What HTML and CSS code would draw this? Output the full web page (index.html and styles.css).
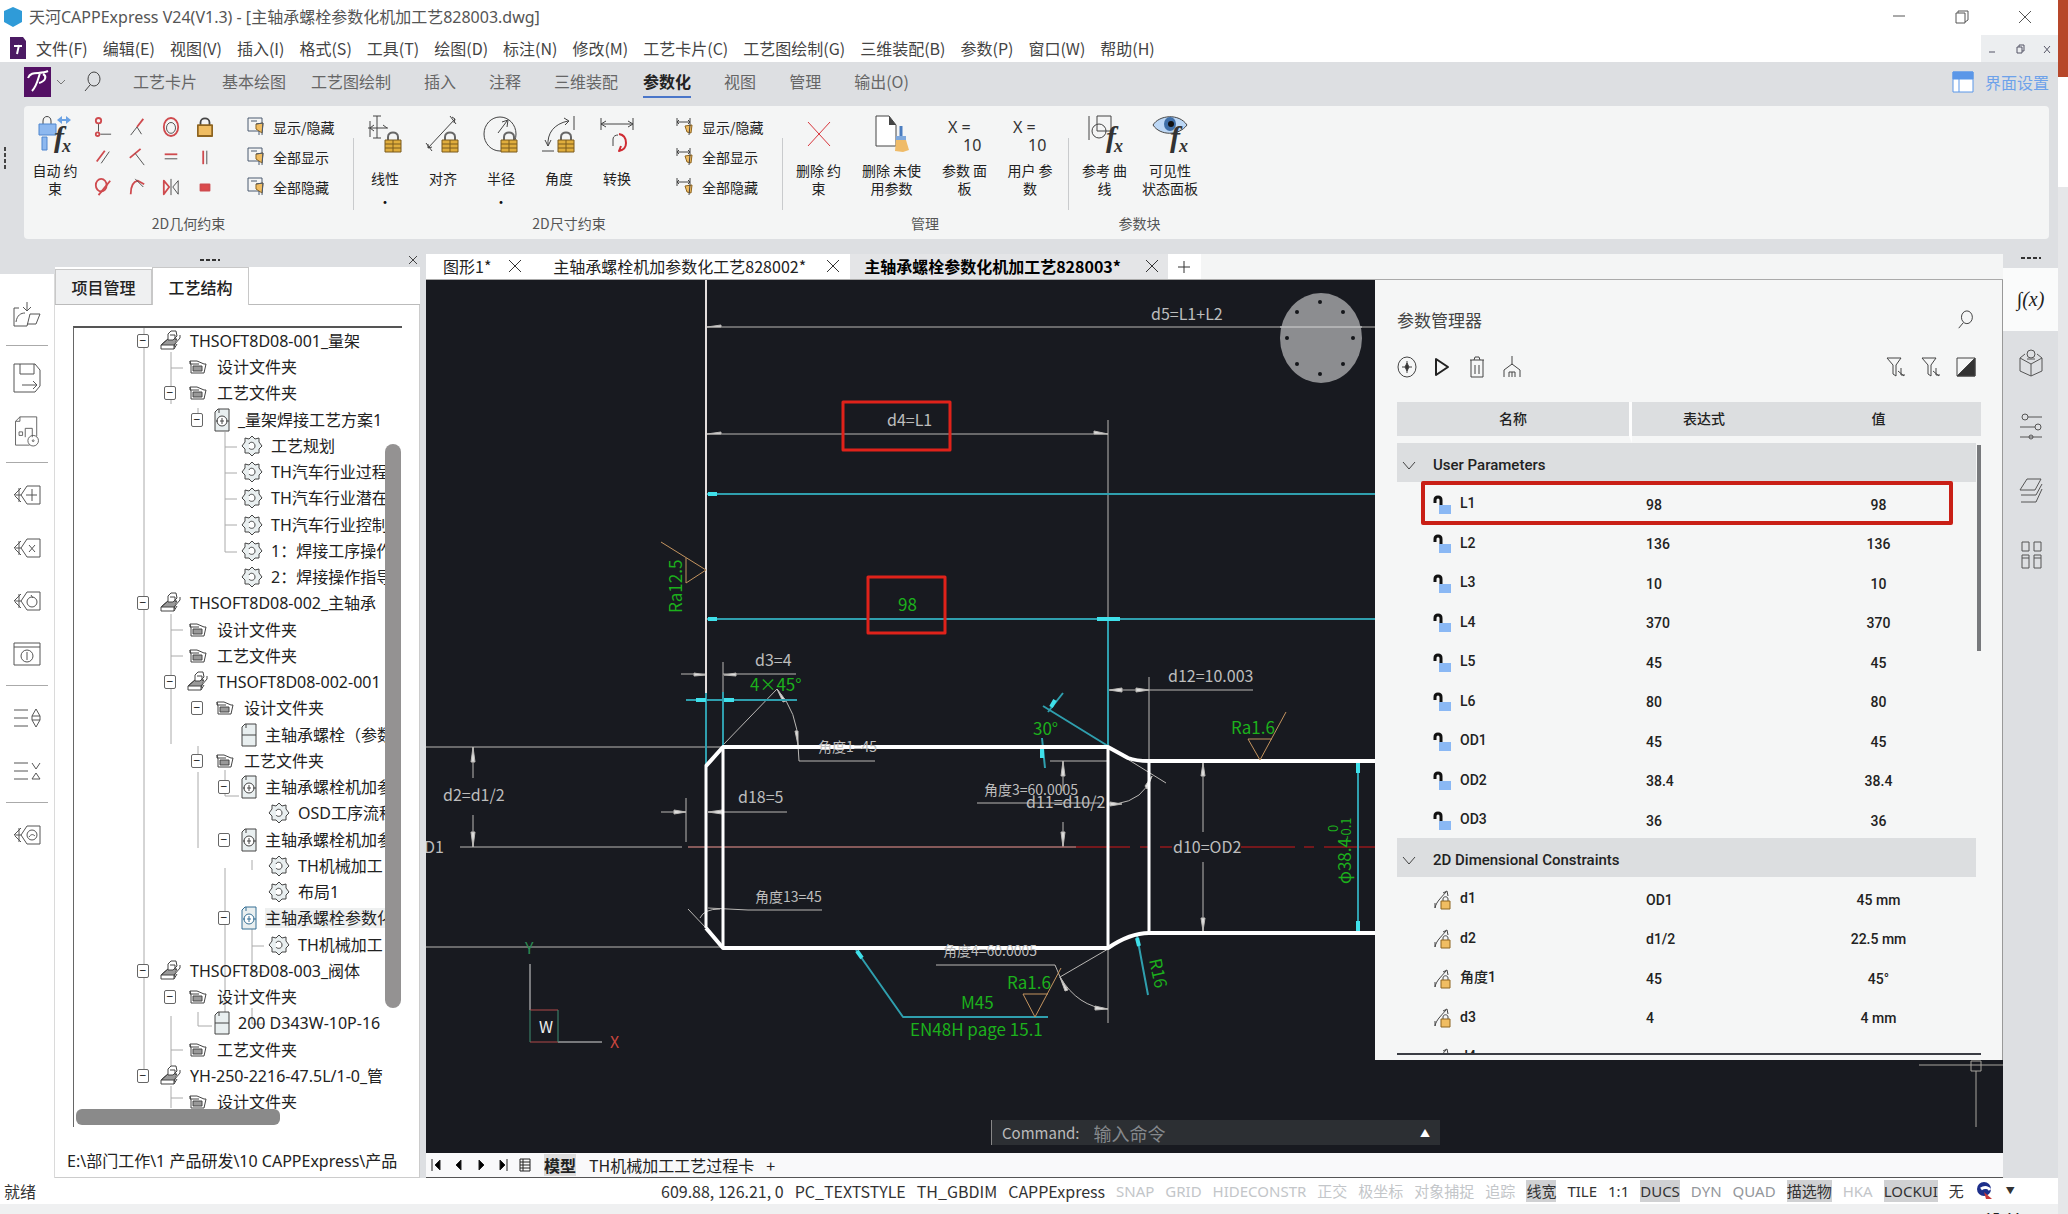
FILE: index.html
```html
<!DOCTYPE html>
<html lang="zh-CN">
<head>
<meta charset="utf-8">
<title>天河CAPPExpress V24(V1.3)</title>
<link rel="stylesheet" href="styles.css">
</head>
<body>
<svg class="defs" aria-hidden="true">
  <symbol id="i-search" viewBox="0 0 18 22"><ellipse cx="10" cy="8" rx="6" ry="7"/><path d="M6 14 1 20"/></symbol>
  <symbol id="i-part" viewBox="0 0 22 22"><path class="shade" d="M2 14 8 9h9l-3 8H3z"/><path d="M1 15h13v4H1zM1 15 8 9M14 15l6-7V5M8 10V4l3-3h5l1 5-4 4zM10 5h5v5M14 19l3-5"/></symbol>
  <symbol id="i-folder" viewBox="0 0 22 22"><path d="M3 5h7l7 3h2l-2 9H4V9zM3 5v3h9"/><path class="shade" d="M6 10h9v5H6z"/></symbol>
  <symbol id="i-doc" viewBox="0 0 16 24"><path class="fold" d="M4 1h11v22H1V4z"/><path d="M1 12h14M5 1v4"/></symbol>
  <symbol id="i-plan" viewBox="0 0 16 24"><path class="fold" d="M4 1h11v22H1V4z"/><circle cx="8" cy="13" r="5"/><path d="M5 1v4M2 13h2M12 13h3M8 10v6M6 13h4"/></symbol>
  <symbol id="i-gear" viewBox="0 0 22 22"><path class="fold" d="m11 1 3 3 4-1 0 4 3 4-3 3v4l-4 0-3 3-3-3-4 0v-4l-3-3 3-4 0-4 4 1z"/><path d="M8 9c1-3 6-2 6 2s-5 4-6 2"/></symbol>
  <symbol id="i-unlock" viewBox="0 0 18 20"><path class="shackle" d="M2 8V5c0-4 6-4 6 0v5"/><path class="body" d="M6 10h12v9H6z"/></symbol>
  <symbol id="i-dim" viewBox="0 0 18 20"><path class="ink" d="M2 18C3 12 8 8 13 2M10 3l4-2 1 5M2 13v5"/><path class="ink" d="M10 12V9c0-3 5-3 5 0v3"/><path class="gold" d="M8 11h9v8H8z"/></symbol>
  <symbol id="i-lock" viewBox="0 0 18 22"><path class="ink" d="M4 9V6c0-6 10-6 10 0v3"/><path class="gold" d="M1 9h16v12H1z"/></symbol>
  <symbol id="i-biglock" viewBox="0 0 18 22"><path class="ring" d="M4 9V6c0-6 10-6 10 0v3"/><path class="brass" d="M1 9h16v12H1zM1 13h16M1 17h16M9 9v12"/></symbol>
  <symbol id="i-show" viewBox="0 0 18 20"><path class="box" d="M1 1h14v13H1zM4 4h6"/><path class="gold" d="m9 7 7-1-1 10-6-4z"/><path d="m9 7 7-1-1 12M12 14v4"/></symbol>
  <symbol id="i-dimshow" viewBox="0 0 18 20"><path class="ink" d="M1 1v8M1 5h13M14 1v8M3 3 1 5l2 2M12 3l2 2-2 2"/><path class="gold" d="m9 9 7-1-1 8-4-1z"/><path class="ink" d="M14 8l-1 10"/></symbol>
  <symbol id="i-tag" viewBox="0 0 28 22"><path class="heavy" d="M1 11h7M6 4v14M1 11l7-7M2 12l6 6"/><path d="m8 11 6-9h13v18H14z"/></symbol>
  <symbol id="i-filter" viewBox="0 0 20 22"><path d="M1 2h14l-5 7v11l-3-2V9z"/><path class="blue" d="M15 12v7h4M12 15l6 5"/></symbol>
</svg>

<div class="app">
  <header class="titlebar">
    <svg class="logo" viewBox="0 0 20 20"><path fill="#2f9bd8" d="M10 0 19 4v11l-9 5-9-5V4z"/></svg>
    <h1>天河CAPPExpress V24(V1.3) - [主轴承螺栓参数化机加工艺828003.dwg]</h1>
    <div class="winbtns">
      <button aria-label="最小化"><svg viewBox="0 0 14 14"><path d="M1 6h12"/></svg></button>
      <button aria-label="还原"><svg viewBox="0 0 14 14"><path d="M1 3h9v10H1zM3 3V1h10v9l-3 2"/></svg></button>
      <button aria-label="关闭"><svg viewBox="0 0 14 14"><path d="m1 1 12 12M13 1 1 13"/></svg></button>
    </div>
  </header>
  <nav class="menubar">
    <svg class="mini" viewBox="0 0 16 22"><path fill="#4b1a63" d="M0 0h13l3 4v18H0z"/><path d="M4 9h8M9 8l-2 9" stroke="#fff" stroke-width="2" fill="none"/></svg>
    <button>文件(F)</button><button>编辑(E)</button><button>视图(V)</button><button>插入(I)</button><button>格式(S)</button><button>工具(T)</button><button>绘图(D)</button><button>标注(N)</button><button>修改(M)</button><button>工艺卡片(C)</button><button>工艺图绘制(G)</button><button>三维装配(B)</button><button>参数(P)</button><button>窗口(W)</button><button>帮助(H)</button>
    <div class="mdibtns">
      <button aria-label="最小化子窗口"><svg viewBox="0 0 10 10"><path d="M2 8h6"/></svg></button>
      <button aria-label="还原子窗口"><svg viewBox="0 0 10 10"><path d="M2 3h5v6H2zM4 3V1h5v6H7"/></svg></button>
      <button aria-label="关闭子窗口"><svg viewBox="0 0 10 10"><path d="m2 2 6 7M8 2 2 9"/></svg></button>
    </div>
  </nav>
  <div class="tabbar">
    <svg class="brand" viewBox="0 0 27 30"><path fill="#531064" d="M0 0h27v30H0z"/><path d="M4 11C7 3 16 8 24 4M16 6c-2 6-3 13-8 18M19 7c4 2 3 7-4 9" stroke="#fff" stroke-width="2" fill="none"/></svg>
    <svg class="caret" viewBox="0 0 10 6"><path d="m1 1 4 4 4-4"/></svg>
    <svg class="find"><use href="#i-search"/></svg>
    <button class="tab tab-wide">工艺卡片</button><button class="tab tab-wide">基本绘图</button><button class="tab">工艺图绘制</button><button class="tab">插入</button><button class="tab">注释</button><button class="tab tab-wide">三维装配</button><button class="tab active">参数化</button><button class="tab">视图</button><button class="tab">管理</button><button class="tab">输出(O)</button>
    <a class="uiset" href="#"><svg viewBox="0 0 22 22"><path d="M1 1h20v20H1z"/><path fill="#5b97e8" d="M1 1h20v7H1z"/><path d="M7 8v13"/></svg>界面设置</a>
  </div>
  <section class="ribbonwrap">
    <svg class="grip" viewBox="0 0 4 24"><path d="M2 0v24" stroke-dasharray="4 2"/></svg>
    <div class="ribbon">
      <div class="group g1">
        <div class="gbody">
          <button class="big first"><svg viewBox="0 0 36 38"><path d="M6 9V6c0-6 8-6 8 0v3" class="ink"/><path d="M2 9h17v11H2zM5 22h5v13H5z" fill="#8db8ef" stroke="#4f86cf"/><path d="m20 5 5-4v3h4V1l5 4-5 4V6h-4v3z" fill="#6ba2e4"/><text class="fx" x="17" y="32">f</text><text class="fx small" x="25" y="37">x</text></svg><span>自动 约<br>束</span></button>
          <div class="minis">
            <button aria-label="重合"><svg viewBox="0 0 20 22"><path d="M5 7v9M7 19h12" class="ink"/><circle cx="5" cy="4" r="3"/><circle cx="4" cy="19" r="2"/></svg></button>
            <button aria-label="共线"><svg viewBox="0 0 20 22"><path class="ink" d="M3 20 10 11l5 8"/><path d="m10 11 7-9"/></svg></button>
            <button aria-label="同心"><svg viewBox="0 0 20 22"><ellipse cx="10" cy="11" rx="8" ry="10"/><ellipse class="ink" cx="10" cy="12" rx="5" ry="6"/></svg></button>
            <button aria-label="固定"><svg viewBox="0 0 20 22"><use href="#i-lock" width="18" height="22" x="1"/></svg></button>
            <button aria-label="平行"><svg viewBox="0 0 20 22"><path d="M3 16 12 4"/><path class="ink" d="M8 18 17 5"/></svg></button>
            <button aria-label="垂直"><svg viewBox="0 0 20 22"><path d="M2 12 14 2"/><path class="ink" d="m8 7 10 13"/></svg></button>
            <button aria-label="水平"><svg viewBox="0 0 20 22"><path d="M3 8h14"/><path class="ink" d="M3 13h14"/></svg></button>
            <button aria-label="竖直"><svg viewBox="0 0 20 22"><path d="M8 4v15"/><path class="ink" d="M12 4v15"/></svg></button>
            <button aria-label="相切"><svg viewBox="0 0 20 22"><ellipse cx="8" cy="9" rx="6" ry="7"/><path d="M5 20 18 4"/></svg></button>
            <button aria-label="平滑"><svg viewBox="0 0 20 22"><path d="M3 19C3 10 6 5 11 4l7 4"/><path class="ink" d="m8 2 9 9"/></svg></button>
            <button aria-label="对称"><svg viewBox="0 0 20 22"><path d="m2 4 6 7-6 8z"/><path class="ink" d="m18 4-6 7 6 8zM10 2v18"/></svg></button>
            <button aria-label="相等"><svg viewBox="0 0 20 22"><path fill="#dc4a4c" d="M5 8h10v7H5z"/></svg></button>
          </div>
          <div class="list"><button><svg><use href="#i-show"/></svg>显示/隐藏</button><button><svg><use href="#i-show"/></svg>全部显示</button><button><svg><use href="#i-show"/></svg>全部隐藏</button></div>
        </div>
        <p>2D几何约束</p>
      </div>
      <div class="group g2">
        <div class="gbody">
          <button class="big one"><svg viewBox="0 0 36 38"><path class="ink" d="M3 6v16M10 1v22M6 1h8M6 23h8M1 13h20M3 13l4-3M3 13l4 3M20 13l-4-3"/><use href="#i-biglock" x="17" y="16" width="18" height="22"/></svg><span>线性</span><i>•</i></button>
          <button class="big one"><svg viewBox="0 0 36 38"><path class="ink" d="M3 33 30 4M25 1l6 8M1 28l6 8M27 2l3 2-1 4M3 29v4l4-1"/><use href="#i-biglock" x="16" y="16" width="18" height="22"/></svg><span>对齐</span></button>
          <button class="big one"><svg viewBox="0 0 36 38"><ellipse class="ink" cx="17" cy="19" rx="16" ry="17"/><path class="ink" d="m15 18 9-12M19 7l6-2-1 7"/><use href="#i-biglock" x="17" y="16" width="18" height="22"/></svg><span>半径</span><i>•</i></button>
          <button class="big one"><svg viewBox="0 0 36 38"><path class="ink" d="M7 31C6 18 13 9 27 6M33 1v14M1 36h12M23 3l5 3-4 4M4 25l3 6 3-6"/><use href="#i-biglock" x="16" y="16" width="18" height="22"/></svg><span>角度</span></button>
          <button class="big one"><svg viewBox="0 0 36 38"><path class="ink" d="M2 3v12M34 3v12M2 9h32M7 6 2 9l5 3M29 6l5 3-5 3M14 31V24c0-3 3-4 5-4"/><path d="M20 19c6 1 7 5 7 9s-2 7-7 8l2-5" stroke="#cf2b32" stroke-width="2"/></svg><span>转换</span></button>
          <div class="list"><button><svg><use href="#i-dimshow"/></svg>显示/隐藏</button><button><svg><use href="#i-dimshow"/></svg>全部显示</button><button><svg><use href="#i-dimshow"/></svg>全部隐藏</button></div>
        </div>
        <p>2D尺寸约束</p>
      </div>
      <div class="group g3">
        <div class="gbody">
          <button class="big"><svg viewBox="0 0 36 38"><path d="M7 7 29 31M29 7 7 31" stroke="#d8363c"/></svg><span>删除 约<br>束</span></button>
          <button class="big"><svg viewBox="0 0 36 38"><path class="ink" fill="#fff" d="M2 1h13l7 9v21H2z"/><path fill="#444" d="M15 1v9h7z"/><path d="M27 11v10" stroke="#4a7dc0" stroke-width="3"/><path d="M22 21h10v4H22z" fill="#7fa9dd"/><path d="M22 25h10l3 10-6 2-8-1z" fill="#efbb68"/></svg><span>删除 未使<br>用参数</span></button>
          <button class="big"><svg viewBox="0 0 36 38"><text class="eq" x="1" y="18">X =</text><text class="eq" x="16" y="36">10</text></svg><span>参数 面<br>板</span></button>
          <button class="big narrow"><svg viewBox="0 0 36 38"><text class="eq" x="1" y="18">X =</text><text class="eq" x="16" y="36">10</text></svg><span>用户 参<br>数</span></button>
        </div>
        <p>管理</p>
      </div>
      <div class="group g4">
        <div class="gbody">
          <button class="big"><svg viewBox="0 0 36 38"><path class="ink" d="M2 1v24M10 1h14v15H10z"/><ellipse class="ink" cx="12" cy="16" rx="7" ry="7"/><text class="fx" x="19" y="32">f</text><text class="fx small" x="27" y="37">x</text></svg><span>参考 曲<br>线</span></button>
          <button class="big narrow"><svg viewBox="0 0 36 38"><path fill="#bcd7f5" class="ink" d="M1 10C7 0 27-2 35 10 27 21 8 21 1 10z"/><ellipse cx="18" cy="9" rx="6" ry="7" fill="#3f6fa8"/><circle cx="19" cy="9" r="3" fill="#111"/><text class="fx" x="18" y="32">f</text><text class="fx small" x="27" y="37">x</text></svg><span>可见性<br>状态面板</span></button>
        </div>
        <p>参数块</p>
      </div>
    </div>
  </section>

  <main class="work">
    <aside class="strip">
      <button aria-label="打开" class="s1"><svg viewBox="0 0 28 26"><path d="M1 7v18h13l3-12h10l-4 10h-9M1 7h5M3 21c1-7 5-9 9-9M14 1v9M10 6l4 4 4-4"/></svg></button>
      <hr class="tight">
      <button aria-label="保存"><svg viewBox="0 0 28 30"><path d="M1 1h21l5 6v16l-5 6H1zM7 1v10h14V1M9 22h15M20 18l4 4-4 4"/></svg></button>
      <button aria-label="图纸设置"><svg viewBox="0 0 28 34"><path d="M6 1h19v22M1 6v27h16M1 6l5-5v5zM5 18h4v4H5zM12 24V14h8v10"/><circle cx="21" cy="28" r="6"/><circle cx="21" cy="28" r="1"/></svg></button>
      <hr>
      <button aria-label="新增"><svg viewBox="0 0 28 22"><use href="#i-tag"/><path d="M13 11h11M19 5v12"/></svg></button>
      <button aria-label="删除"><svg viewBox="0 0 28 22"><use href="#i-tag"/><path d="m16 8 6 7M22 8l-6 7"/></svg></button>
      <button aria-label="刷新"><svg viewBox="0 0 28 22"><use href="#i-tag"/><ellipse cx="19" cy="12" rx="5" ry="5"/><path d="m18 5 2 3"/></svg></button>
      <button aria-label="信息"><svg viewBox="0 0 28 24"><path d="M1 1h26v22H1zM1 5h26"/><circle cx="14" cy="14" r="6"/><path d="M14 10v8"/></svg></button>
      <hr>
      <button aria-label="展开"><svg viewBox="0 0 28 18"><path d="M1 1h14M1 9h14M1 17h14M23 0l4 7h-8zM23 18l4-7h-8zM19 7v4M27 7v4"/></svg></button>
      <button aria-label="折叠"><svg viewBox="0 0 28 18"><path d="M1 1h14M1 9h14M1 17h14M19 1l4 6 4-6M19 17l4-6 4 6z"/></svg></button>
      <hr>
      <button aria-label="定位"><svg viewBox="0 0 28 22"><use href="#i-tag"/><circle cx="19" cy="11" r="5"/><path d="M16 13c2-3 4-3 6-1"/></svg></button>
    </aside>

    <aside class="side">
      <div class="sidehead"><svg class="dots" viewBox="0 0 20 4"><path d="M0 2h20" stroke-dasharray="4 2"/></svg><button aria-label="关闭面板"><svg viewBox="0 0 10 10"><path d="m1 1 8 8M9 1 1 9"/></svg></button></div>
      <div class="sidetabs"><button>项目管理</button><button class="on">工艺结构</button></div>
      <div class="sidebody">
        <div class="tree">
          <svg class="wires" viewBox="0 0 311 780"><path d="M70 0v742M97 24v52M97 40h12M124 80v10M151 104v120M151 119h12M151 145h12M151 171h12M151 197h12M151 224h12M97 286v130M97 302h12M97 328h12M124 418v10M124 444v76M151 442v26h14M151 540v164M178 532v10M178 580v64M178 618h12M178 644h12M178 680v16h12M97 750v-62M124 684v14h14M97 722h12M97 758v22M97 770h12"/></svg>
          <ul>
            <li class="l1"><button>−</button><svg><use href="#i-part"/></svg>THSOFT8D08-001_量架</li>
            <li class="l2"><b></b><svg><use href="#i-folder"/></svg>设计文件夹</li>
            <li class="l2"><button>−</button><svg><use href="#i-folder"/></svg>工艺文件夹</li>
            <li class="l3"><button>−</button><svg class="pg"><use href="#i-plan"/></svg>_量架焊接工艺方案1</li>
            <li class="l4"><b></b><svg><use href="#i-gear"/></svg>工艺规划</li>
            <li class="l4"><b></b><svg><use href="#i-gear"/></svg>TH汽车行业过程</li>
            <li class="l4"><b></b><svg><use href="#i-gear"/></svg>TH汽车行业潜在</li>
            <li class="l4"><b></b><svg><use href="#i-gear"/></svg>TH汽车行业控制</li>
            <li class="l4"><b></b><svg><use href="#i-gear"/></svg>1：焊接工序操作</li>
            <li class="l4"><b></b><svg><use href="#i-gear"/></svg>2：焊接操作指导</li>
            <li class="l1"><button>−</button><svg><use href="#i-part"/></svg>THSOFT8D08-002_主轴承</li>
            <li class="l2"><b></b><svg><use href="#i-folder"/></svg>设计文件夹</li>
            <li class="l2"><b></b><svg><use href="#i-folder"/></svg>工艺文件夹</li>
            <li class="l2"><button>−</button><svg><use href="#i-part"/></svg>THSOFT8D08-002-001</li>
            <li class="l3"><button>−</button><svg><use href="#i-folder"/></svg>设计文件夹</li>
            <li class="l4"><b></b><svg class="pg"><use href="#i-doc"/></svg>主轴承螺栓（参数</li>
            <li class="l3"><button>−</button><svg><use href="#i-folder"/></svg>工艺文件夹</li>
            <li class="l4"><button>−</button><svg class="pg"><use href="#i-plan"/></svg>主轴承螺栓机加参</li>
            <li class="l5"><b></b><svg><use href="#i-gear"/></svg>OSD工序流程</li>
            <li class="l4"><button>−</button><svg class="pg"><use href="#i-plan"/></svg>主轴承螺栓机加参</li>
            <li class="l5"><b></b><svg><use href="#i-gear"/></svg>TH机械加工</li>
            <li class="l5"><b></b><svg><use href="#i-gear"/></svg>布局1</li>
            <li class="l4 sel"><button>−</button><svg class="pg"><use href="#i-plan"/></svg><span>主轴承螺栓参数化</span></li>
            <li class="l5"><b></b><svg><use href="#i-gear"/></svg>TH机械加工</li>
            <li class="l1"><button>−</button><svg><use href="#i-part"/></svg>THSOFT8D08-003_阀体</li>
            <li class="l2"><button>−</button><svg><use href="#i-folder"/></svg>设计文件夹</li>
            <li class="l3"><b></b><svg class="pg"><use href="#i-doc"/></svg>200 D343W-10P-16</li>
            <li class="l2"><b></b><svg><use href="#i-folder"/></svg>工艺文件夹</li>
            <li class="l1"><button>−</button><svg><use href="#i-part"/></svg>YH-250-2216-47.5L/1-0_管</li>
            <li class="l2"><b></b><svg><use href="#i-folder"/></svg>设计文件夹</li>
          </ul>
          <div class="vbar"></div><div class="hbar"></div>
        </div>
        <p class="path">E:\部门工作\1 产品研发\10 CAPPExpress\产品</p>
      </div>
    </aside>

    <section class="editor">
      <div class="doctabs">
        <div class="dt d1"><button>图形1*</button><button class="x" aria-label="关闭"><svg viewBox="0 0 12 12"><path d="m0 0 12 12M12 0 0 12"/></svg></button></div>
        <div class="dt d2"><button>主轴承螺栓机加参数化工艺828002*</button><button class="x" aria-label="关闭"><svg viewBox="0 0 12 12"><path d="m0 0 12 12M12 0 0 12"/></svg></button></div>
        <div class="dt on"><button>主轴承螺栓参数化机加工艺828003*</button><button class="x" aria-label="关闭"><svg viewBox="0 0 12 12"><path d="m0 0 12 12M12 0 0 12"/></svg></button></div>
        <button class="plus" aria-label="新建"><svg viewBox="0 0 12 12"><path d="M6 0v12M0 6h12"/></svg></button>
      </div>
      <div class="canvas">
        <svg class="cad" viewBox="426 280 1577 873" preserveAspectRatio="xMinYMin slice">
          <g class="thin">
            <path d="M707 327H1400M707 434H1108M1108 420V620M426 747H723M426 947H723M460 847H682M473 747v31M473 815v32M681 674h25M723 674h73M723 662v40M723 745 777 689Q798 712 798 745L799 761H875M686 798v44M661 812h25M708 812h79M688 909l18 19M700 918q4-9 20-9M708 908l40 2H822"/>
            <path d="M1149 677v84M1110 690h143M1050 761h58M1063 761v30M1063 822v25M977 803h123M1108 747l58 36M1152 776q-8 24-36 28h-8M1203 763v69M1203 862v69M936 965h119l11 26M1108 949 1060 977q18 30 48 32M1108 948v75M688 847h388"/>
            <path class="head" d="M707 327l14-2v2zM707 434l14-2v2zM1108 434l-14-3v3zM473 747l-2 15h4zM473 847l-2-15h4zM706 675l-12-2v3zM724 675l12-2v3zM686 812l-12-2v4zM708 812l14-2v4zM1109 690l13-2v4zM1149 690l-13-2v4zM1063 761l-2 15h4zM1063 847l-2-15h4zM1203 763l-2 13h4zM1203 931l-2-13h4zM798 745l-3-14h3zM777 689l9 12-3 1zM1108 1009l-13-3v4zM1060 977l8 13-3 1zM1122 804l-12-2v4zM1152 776l-5 13-2-3z"/>
          </g>
          <path class="red" d="M688 847h388"/>
          <path class="darkred" d="M1076 847h54M1140 847h9M1160 847h12M1241 847h54M1304 847h10M1324 847h70"/>
          <g class="cyan"><path d="M707 494H1400M707 619H1400M1108 619V747M706 693v72M723 692v55M686 700h111M1108 746 1043 706M1063 693 1048 712M1042 738l3 30M856 950l47 67h145M1137 936l11 59M1358 763v168"/>
            <path class="blob" d="M708 494h9M708 619h9M1097 619h23M696 700h10M724 700h10M1051 707l4-7M1042 748v10M857 951l5 7M1137 938l2 8M1358 763v10M1358 921v10"/></g>
          <g class="solid"><path class="edge" d="M706 280V693"/><path class="mid" d="M723 747V948M1108 747V948M1149 761V933M706 765V928"/>
            <path d="M706 766 723 747H1108L1128 758Q1136 761 1149 761H1400M706 928 723 948H1108Q1130 933 1149 933H1400"/></g>
          <g class="tan"><path d="M661 542 706 570 686 583V558M1286 712 1260 760 1248 739H1272M1061 968 1035 1017 1023 994H1048"/></g>
          <g class="wtext"><text x="1151" y="320">d5=L1+L2</text><text x="887" y="426">d4=L1</text><text x="443" y="801">d2=d1/2</text><text x="424" y="853">D1</text><text x="755" y="666">d3=4</text><text x="818" y="752" class="cjk">角度1=45</text><text x="738" y="803">d18=5</text><text x="755" y="902" class="cjk">角度13=45</text><text x="1168" y="682">d12=10.003</text><text x="984" y="795" class="cjk">角度3=60.0005</text><text x="1026" y="808">d11=d10/2</text><text x="1173" y="853">d10=OD2</text><text x="943" y="956" class="cjk">角度4=60.0005</text></g>
          <g class="gtext"><text x="898" y="611">98</text><text transform="translate(682 613) rotate(-90)">Ra12.5</text><text x="750" y="691">4×45°</text><text x="1033" y="735">30°</text><text x="1231" y="734">Ra1.6</text><text x="1007" y="989">Ra1.6</text><text x="961" y="1009">M45</text><text x="910" y="1036">EN48H page 15.1</text><text transform="translate(1351 884) rotate(-90)">φ38.4</text><text class="tol" transform="translate(1351 840) rotate(-90)">-0.1</text><text class="tol" transform="translate(1338 832) rotate(-90)">0</text><text transform="translate(1149 960) rotate(78)">R16</text></g>
          <g class="ucs"><path stroke="#d8d8d8" d="M530 964v46M558 1042h44"/><path stroke="#b04848" d="M530 1010h28M530 1042h28"/><path stroke="#3f8e70" d="M530 1010v32M558 1010v32"/><text x="525" y="954" fill="#2b8b52">Y</text><text x="539" y="1033" fill="#eee">W</text><text x="610" y="1048" fill="#c9463e">X</text></g>
          <g><ellipse cx="1321" cy="338" rx="41" ry="45" fill="#8c8d90"/><path d="M1280 327h82" stroke="#d5d5d5"/><g fill="#15161a"><circle cx="1320" cy="302" r="2"/><circle cx="1297" cy="312" r="2"/><circle cx="1343" cy="312" r="2"/><circle cx="1287" cy="338" r="2"/><circle cx="1353" cy="338" r="2"/><circle cx="1297" cy="364" r="2"/><circle cx="1343" cy="364" r="2"/><circle cx="1320" cy="374" r="2"/></g></g>
          <path class="mark" d="M843 402h107v48H843zM868 577h77v56H868z"/>
          <path class="cross" d="M1919 1065h84M1971 1061h10v10h-10zM1976 1071v56"/>
        </svg>

        <section class="params">
          <div class="ptitle"><h2>参数管理器</h2><button aria-label="搜索"><svg><use href="#i-search"/></svg></button></div>
          <div class="ptools">
            <button aria-label="添加"><svg viewBox="0 0 20 22"><ellipse cx="10" cy="11" rx="9" ry="10"/><path d="M10 5v12M5 11h10"/><path fill="#333" d="m10 7 2 4-2 4-2-4z"/></svg></button>
            <button aria-label="运行"><svg viewBox="0 0 20 22"><path class="heavy" d="M4 3v16l12-8z"/></svg></button>
            <button aria-label="删除"><svg viewBox="0 0 20 22"><path d="M3 4h14M4 4v17h12V4M7 4l1-3h4l1 3M8 9v9M12 9v9"/></svg></button>
            <button aria-label="清理"><svg viewBox="0 0 20 22"><path d="M10 0v9M2 21v-7l8-6 8 6v7M7 21v-5h6v5M10 16v5"/></svg></button>
            <span class="grow"></span>
            <button aria-label="筛选"><svg viewBox="0 0 20 22"><use href="#i-filter"/></svg></button>
            <button aria-label="清除筛选"><svg viewBox="0 0 20 22"><use href="#i-filter"/></svg></button>
            <button aria-label="对比"><svg viewBox="0 0 20 22"><path d="M1 2h18v18H1z"/><path fill="#333" d="M19 2v18H1z"/></svg></button>
          </div>
          <div class="pscroll">
          <table>
            <colgroup><col class="c1"><col class="c2"><col></colgroup>
            <thead><tr><th>名称</th><th>表达式</th><th>值</th></tr></thead>
            <tbody>
              <tr class="grp"><th colspan="3"><svg viewBox="0 0 14 9"><path d="m1 1 6 7 6-7"/></svg>User Parameters</th></tr>
              <tr><td><svg><use href="#i-unlock"/></svg>L1</td><td>98</td><td>98</td></tr>
              <tr><td><svg><use href="#i-unlock"/></svg>L2</td><td>136</td><td>136</td></tr>
              <tr><td><svg><use href="#i-unlock"/></svg>L3</td><td>10</td><td>10</td></tr>
              <tr><td><svg><use href="#i-unlock"/></svg>L4</td><td>370</td><td>370</td></tr>
              <tr><td><svg><use href="#i-unlock"/></svg>L5</td><td>45</td><td>45</td></tr>
              <tr><td><svg><use href="#i-unlock"/></svg>L6</td><td>80</td><td>80</td></tr>
              <tr><td><svg><use href="#i-unlock"/></svg>OD1</td><td>45</td><td>45</td></tr>
              <tr><td><svg><use href="#i-unlock"/></svg>OD2</td><td>38.4</td><td>38.4</td></tr>
              <tr><td><svg><use href="#i-unlock"/></svg>OD3</td><td>36</td><td>36</td></tr>
              <tr class="grp"><th colspan="3"><svg viewBox="0 0 14 9"><path d="m1 1 6 7 6-7"/></svg>2D Dimensional Constraints</th></tr>
              <tr><td><svg><use href="#i-dim"/></svg>d1</td><td>OD1</td><td>45 mm</td></tr>
              <tr><td><svg><use href="#i-dim"/></svg>d2</td><td>d1/2</td><td>22.5 mm</td></tr>
              <tr><td><svg><use href="#i-dim"/></svg>角度1</td><td>45</td><td>45°</td></tr>
              <tr><td><svg><use href="#i-dim"/></svg>d3</td><td>4</td><td>4 mm</td></tr>
              <tr><td><svg><use href="#i-dim"/></svg>d4</td><td></td><td></td></tr>
            </tbody>
          </table>
          <div class="pbar"></div><div class="hot"></div>
          </div>
        </section>

        <div class="command"><label for="cmd">Command:</label><input id="cmd" placeholder="输入命令"><span>▲</span></div>
      </div>
      <div class="sheets">
        <button aria-label="首页"><svg viewBox="0 0 12 14"><path d="M1 1v12"/><path fill="#000" d="M9 2v10L4 7z"/></svg></button><button aria-label="上一页"><svg viewBox="0 0 12 14"><path fill="#000" d="M8 2v10L3 7z"/></svg></button><button aria-label="下一页"><svg viewBox="0 0 12 14"><path fill="#000" d="M4 2v10l5-5z"/></svg></button><button aria-label="末页"><svg viewBox="0 0 12 14"><path fill="#000" d="M3 2v10l5-5z"/><path d="M10 1v12"/></svg></button><button aria-label="布局列表"><svg viewBox="0 0 12 14"><path d="M1 1h10v12H1zM1 4h10M1 7h10M1 10h10M4 1v12"/></svg></button>
        <button class="model">模型</button><button class="sheet">TH机械加工工艺过程卡</button><button class="sheet add">+</button>
      </div>
    </section>

    <aside class="rail">
      <svg class="dots" viewBox="0 0 20 4"><path d="M0 2h20" stroke-dasharray="4 2"/></svg>
      <button class="on" aria-label="参数">∫(x)</button>
      <button aria-label="模型"><svg viewBox="0 0 24 28"><path d="m1 9 11 6 11-6-5-4M6 5 1 9v13l11 5 11-5V9M12 15v12"/><circle cx="12" cy="5" r="4"/><path d="M8 10h8"/></svg></button>
      <button aria-label="设置"><svg viewBox="0 0 24 28"><path d="M9 4h14M1 14h15M1 24h22"/><circle cx="6" cy="4" r="3"/><circle cx="19" cy="14" r="3"/><circle cx="12" cy="24" r="2"/></svg></button>
      <button aria-label="图层"><svg viewBox="0 0 24 28"><path d="M8 2h14l-6 11H1zM23 7l-6 11H2M23 12l-6 13H2"/></svg></button>
      <button aria-label="图块"><svg viewBox="0 0 24 28"><path d="M3 1h7v9H3zM15 1h7v9h-7zM3 14h7v13H3zM15 14h7v13h-7zM3 17h7M15 17h7"/></svg></button>
    </aside>
  </main>

  <footer class="status">
    <span class="ready">就绪</span>
    <span>609.88, 126.21, 0</span><span>PC_TEXTSTYLE</span><span>TH_GBDIM</span><span>CAPPExpress</span>
    <button class="off">SNAP</button><button class="off">GRID</button><button class="off">HIDECONSTR</button><button class="off">正交</button><button class="off">极坐标</button><button class="off">对象捕捉</button><button class="off">追踪</button><button class="hl">线宽</button><button>TILE</button><button>1:1</button><button class="hl">DUCS</button><button class="off dark">DYN</button><button class="off dark">QUAD</button><button class="hl">描选物</button><button class="off">HKA</button><button class="hl">LOCKUI</button><button>无</button>
    <svg class="ball" viewBox="0 0 20 18"><circle cx="9" cy="7" r="7" fill="#1d2f8a"/><path d="M6 7c4-3 8-1 9 1" stroke="#fff" stroke-width="3" fill="none"/><path d="m9 10 8 7H11z" fill="#c73a3a"/></svg><span class="dd">▼</span>
  </footer>
  <div class="under"><time>15:44</time></div>
</div>
<div class="behind"><div class="b1"></div><div class="b2"></div><div class="b3"></div></div>
</body>
</html>
```
FILE: styles.css
```css
* { box-sizing: border-box; }
html, body { margin: 0; height: 100%; }
body { display: flex; overflow: hidden; background: #dddfe2; color: #222; font: 16px/20px "Noto Sans CJK SC", sans-serif; }
button { border: 0; padding: 0; margin: 0; background: none; color: inherit; font: inherit; white-space: nowrap; }
button svg { display: block; }
svg { flex: none; overflow: visible; }
path, ellipse, circle { stroke-linejoin: round; }
p, h1, h2, ul { margin: 0; padding: 0; font-weight: 400; font-size: 16px; list-style: none; }
.defs { position: absolute; width: 0; height: 0; }
.app { flex: 1; min-width: 0; height: 100%; display: flex; flex-direction: column; }
.behind { width: 10px; display: flex; flex-direction: column; background: #e6e7e9; }
.b1 { height: 77px; background: #b7472a; }
.b2 { height: 110px; background: #fff; }
.b3 { flex: 1; }

.ink, .ink * { stroke: #444; }
.gold { fill: #f0bd62; stroke: #8d6420; }
.ring { stroke: #666; stroke-width: 2; }
.brass { fill: #e0ad3c; stroke: #7a5a1c; }

.titlebar { height: 35px; display: flex; align-items: center; background: #fff; padding: 0 0 2px 3px; }
.logo { width: 20px; height: 20px; margin-right: 6px; }
.titlebar h1 { flex: 1; color: #555; font-family: "Noto Sans", "Noto Sans CJK SC", sans-serif; }
.winbtns { display: flex; gap: 49px; padding-right: 26px; }
.winbtns svg { width: 14px; height: 14px; fill: none; stroke: #555; }
.menubar { height: 27px; display: flex; align-items: center; gap: 15px; background: #fff; padding: 0 0 2px 10px; color: #444; }
.mini { width: 16px; height: 22px; margin-right: -5px; }
.mdibtns { margin: 0 0 -2px auto; align-self: stretch; width: 77px; background: #eceef0; display: flex; align-items: center; justify-content: space-between; padding: 0 6px; }
.mdibtns svg { width: 10px; height: 10px; fill: none; stroke: #556; }
.tabbar { height: 44px; display: flex; align-items: center; padding: 0 9px 4px 24px; color: #666; }
.brand { width: 27px; height: 30px; }
.caret { width: 10px; height: 6px; margin-left: 5px; fill: none; stroke: #777; }
.find { width: 18px; height: 22px; margin: 0 31px 0 18px; fill: none; stroke: #444; }
.tab { margin-right: 33px; height: 32px; border-bottom: 2px solid transparent; }
.tab-wide { margin-right: 25px; }
.tab.active { color: #222; font-weight: 700; border-color: #4a76c9; }
.uiset { margin-left: auto; display: flex; align-items: center; gap: 11px; color: #6da2ea; text-decoration: none; }
.uiset svg { width: 22px; height: 22px; fill: #fff; stroke: #5b97e8; }

.ribbonwrap { display: flex; align-items: center; padding-right: 9px; }
.grip { width: 4px; height: 24px; margin: 0 17px 28px 3px; stroke: #444; stroke-width: 2; }
.ribbon { flex: 1; height: 133px; display: flex; background: #f4f5f5; border-radius: 4px; padding-top: 6px; font-size: 14px; line-height: 18px; }
.group { position: relative; display: flex; flex-direction: column; }
.group + .group::before { content: ""; position: absolute; left: 0; top: 26px; height: 72px; border-left: 1px solid #c9cbcd; }
.g1 { width: 329px; } .g2 { width: 429px; padding-left: 3px; } .g3 { width: 286px; } .g4 { width: 143px; }
.gbody { height: 96px; display: flex; }
.group p { text-align: center; font-size: 14px; line-height: 30px; color: #555; }
.big { width: 73px; padding-top: 3px; display: flex; flex-direction: column; align-items: center; justify-content: flex-start; line-height: 18px; }
.big svg { width: 36px; height: 38px; margin-bottom: 8px; fill: none; stroke-width: 1; }
.big.first { width: 62px; }
.big.narrow { width: 58px; }
.one { width: 58px; }
.big.one svg { margin-bottom: 16px; }
.one i { font-style: normal; line-height: 28px; color: #111; }
.fx { font: italic 700 30px "Liberation Serif", serif; fill: #333; }
.fx.small { font-size: 18px; }
.eq { font: 16px "Noto Sans", sans-serif; fill: #333; }
.minis { display: grid; grid-template-columns: repeat(4, 34px); grid-auto-rows: 30px; place-items: center; }
.minis svg { width: 18px; height: 20px; fill: none; stroke: #cf4a4e; stroke-width: 2; }
.minis .ink { stroke-width: 1; }
.list { padding-left: 25px; }
.g2 .list { padding-left: 30px; }
.list button { height: 30px; display: flex; align-items: center; gap: 8px; }
.list svg { width: 18px; height: 20px; fill: none; stroke: #4a5a70; }
.list .gold { stroke: none; }

.work { flex: 1; min-height: 0; display: flex; }
.strip { width: 55px; margin-top: 35px; background: #fff; border-right: 1px solid #dadada; display: flex; flex-direction: column; align-items: center; }
.strip svg { width: 28px; height: 30px; fill: none; stroke: #555; }
.strip .heavy { stroke: #222; stroke-width: 2; }
.strip button { height: 53px; display: flex; align-items: center; }
.strip .s1 { height: 71px; padding-top: 8px; }
.strip hr { width: 42px; margin: 5px 0; border: 0; border-top: 1px solid #aaa; height: 1px; }
.strip .tight { margin-top: 0; }

.side { width: 365px; display: flex; flex-direction: column; min-height: 0; }
.sidehead { height: 28px; flex: none; display: flex; justify-content: flex-end; align-items: center; padding: 14px 2px 0 0; }
.dots { width: 20px; height: 4px; stroke: #333; stroke-width: 2; }
.sidehead .dots { margin-right: 188px; }
.sidehead button svg { width: 10px; height: 10px; stroke: #444; }
.sidetabs { height: 38px; flex: none; display: flex; align-items: flex-end; background: #fff; border-bottom: 1px solid #bbb; }
.sidetabs button { width: 97px; height: 35px; background: #eff0f1; border: 1px solid #c8c8c8; border-bottom: 0; font-weight: 500; }
.sidetabs .on { height: 38px; margin-bottom: -1px; background: #fff; }
.sidebody { flex: 1; min-height: 0; background: #fff; border-right: 1px solid #ccc; border-bottom: 1px solid #ccc; padding: 21px 17px 0 18px; display: flex; flex-direction: column; }
.tree { position: relative; flex: 1; min-height: 0; border-left: 1px solid #666; border-top: 2px solid #555; overflow: hidden; padding-right: 17px; }
.tree ul { overflow: hidden; height: calc(100% - 18px); font-family: "Noto Sans", "Noto Sans CJK SC", sans-serif; position: relative; }
.wires { position: absolute; left: 0; top: 0; width: 311px; height: 780px; fill: none; stroke: #aaa; }
.tree li { height: 26px; display: flex; align-items: center; white-space: nowrap; }
.tree li:nth-child(4n) { height: 27px; }
.tree li button, .tree li b { width: 12px; height: 14px; margin-right: 11px; flex: none; }
.tree li button { border: 1px solid #666; background: #fff; border-radius: 2px; line-height: 10px; font-size: 12px; }
.tree li svg { width: 22px; height: 22px; margin-right: 8px; fill: #fff; stroke: #444; }
.tree li svg.pg { width: 16px; height: 24px; }
.fold { fill: #e9eff0; }
.shade { fill: #999; }
.l1 { padding-left: 63px; } .l2 { padding-left: 90px; } .l3 { padding-left: 117px; } .l4 { padding-left: 144px; } .l5 { padding-left: 171px; }
.sel span { background: #eef0f0; }
.sel .pg { stroke: #356f94; }
.vbar { position: absolute; right: 1px; top: 116px; width: 16px; height: 564px; border-radius: 8px; background: #949292; }
.hbar { position: absolute; left: 2px; bottom: 2px; width: 204px; height: 16px; border-radius: 6px; background: #8a8a8a; }
.path { line-height: 50px; height: 50px; margin-left: -6px; margin-right: -5px; padding-top: 9px; overflow: hidden; white-space: nowrap; font-family: "Noto Sans", "Noto Sans CJK SC", sans-serif; }

.editor { flex: 1; min-width: 0; margin-left: 6px; padding-top: 15px; display: flex; flex-direction: column; }
.doctabs { height: 26px; display: flex; background: #f4f5f5; border-bottom: 1px solid #aaa; }
.dt { display: flex; align-items: center; background: #fff; padding: 0 11px 2px 17px; }
.d1 { gap: 18px; padding-right: 15px; }
.d2 { gap: 21px; }
.dt.on { background: #e4e5e7; font-weight: 700; padding: 0 10px 2px 14px; gap: 25px; color: #000; }
.dt svg, .plus svg { width: 12px; height: 12px; stroke: #333; }
.plus { width: 33px; background: #fff; display: grid; place-items: center; }
.canvas { position: relative; flex: 1; min-height: 0; background: #181a20; overflow: hidden; }
.cad { position: absolute; left: 0; top: 0; width: 100%; height: 100%; fill: none; }
.thin { stroke: #b9b7b4; stroke-width: 1; }
.thin .head { fill: #ddd; }
.red { stroke: #a34a48; stroke-width: 1; }
.darkred { stroke: #74181c; stroke-width: 2; }
.cyan { stroke: #2f9fae; stroke-width: 2; }
.cyan .blob { stroke: #3fe0ea; stroke-width: 4; }
.solid { stroke: #fff; stroke-width: 4; }
.solid .mid { stroke-width: 3; }
.solid .edge { stroke: #e3dedd; stroke-width: 2; }
.tan { stroke: #c4945f; }
.wtext { fill: #bdbdbd; }
.gtext { fill: #1cb01c; }
.wtext, .ucs { font: 16px "Noto Sans CJK SC", sans-serif; }
.gtext { font: 17px "Noto Sans CJK SC", sans-serif; }
.cjk { font-size: 14px; }
.tol { font-size: 13px; }
.mark { stroke: #e0221a; stroke-width: 3; }
.cross { stroke: #a7a49d; }

.params { position: absolute; right: 0; top: 0; width: 628px; height: 780px; background: #f5f6f6; border-right: 1px solid #999; padding: 28px 21px 0 22px; display: flex; flex-direction: column; }
.ptitle { display: flex; justify-content: space-between; align-items: center; height: 24px; padding-right: 6px; }
.ptitle h2 { font-size: 17px; color: #444; }
.ptitle svg { width: 18px; height: 20px; fill: none; stroke: #333; }
.ptools { display: flex; gap: 15px; height: 22px; margin: 24px 5px 24px 0; }
.ptools svg { width: 20px; height: 22px; fill: none; stroke: #444; }
.ptools .heavy { stroke-width: 2; stroke: #222; }
.ptools .blue { stroke: #7d9fca; }
.grow { flex: 1; }
.pscroll { position: relative; flex: 1; min-height: 0; overflow: hidden; border-bottom: 2px solid #3a3d44; margin-bottom: 5px; }
table { width: 100%; table-layout: fixed; border-collapse: separate; border-spacing: 0; font: 500 14px/18px Roboto, "Noto Sans CJK SC", sans-serif; color: #222; }
.c1 { width: 235px; } .c2 { width: 144px; }
th, td { padding: 0; }
thead th { height: 41px; border-bottom: 7px solid #f5f6f6; background: #dcdee0; background-clip: padding-box; font-weight: 500; font-size: 14px; }
thead th:first-child { border-right: 3px solid #fdfdfd; }
tbody td { height: 39px; text-align: center; padding-top: 5px; }
tbody tr:nth-child(even) td { height: 40px; }
tbody td:first-child { text-align: left; padding-left: 36px; }
tbody td:nth-child(2) { text-align: left; padding-left: 14px; }
td svg { width: 18px; height: 20px; margin-right: 9px; vertical-align: middle; fill: none; stroke-width: 1; }
.shackle { stroke: #111; stroke-width: 3; }
.body { fill: #8ab8f4; }
.grp th { height: 39px; text-align: left; background: #dcdee0; border-right: 5px solid #f5f6f6; background-clip: padding-box; font-size: 15px; font-weight: 500; padding: 4px 0 0 5px; }
.grp svg { width: 14px; height: 9px; margin-right: 17px; fill: none; stroke: #444; }
.pbar { position: absolute; right: 0; top: 43px; width: 4px; height: 206px; background: #77797c; }
.hot { position: absolute; left: 24px; right: 28px; top: 79px; height: 44px; border: 4px solid #c91f16; border-radius: 2px; }
.command { position: absolute; left: 565px; bottom: 8px; width: 449px; height: 25px; background: #2c2f33; color: #bbb; display: flex; align-items: center; gap: 14px; padding: 0 10px; border-left: 1px solid #888; }
.command label { font-size: 15px; }
.command input { flex: 1; border: 0; background: none; font: inherit; font-size: 18px; padding: 0; color: #ccc; min-width: 0; }
.command input::placeholder { color: #85888c; }
.command span { font-size: 10px; color: #fff; }
.sheets { height: 25px; display: flex; align-items: center; background: #f9f9fa; border-bottom: 1px solid #555; }
.sheets svg { width: 12px; height: 14px; fill: none; stroke: #222; }
.sheets button { width: 22px; display: flex; justify-content: center; }
.sheets .model { width: auto; margin: 0 13px 0 8px; font-weight: 700; background: #ddd; line-height: 22px; }
.sheets .sheet { width: auto; }
.sheets .add { margin-left: 12px; }

.rail { width: 55px; padding-top: 15px; display: flex; flex-direction: column; align-items: center; }
.rail .dots { margin: 2px 0 8px; }
.rail button { width: 100%; height: 64px; display: grid; place-items: center; }
.rail .on { height: 63px; background: #fafbfb; font: italic 20px "Liberation Serif", serif; }
.rail button svg { width: 24px; height: 28px; fill: none; stroke: #555; }

.status { height: 26px; display: flex; align-items: center; gap: 11px; background: #fff; padding-left: 4px; font: 15px/18px "Noto Sans", "Noto Sans CJK SC", sans-serif; color: #333; white-space: nowrap; }
.status span { font-size: 16px; font-family: "Noto Sans CJK SC", sans-serif; }
.ready { width: 646px; }
.status .off { color: #c3c6c9; }
.status .dark { color: #94979b; }
.status .hl { background: #d0d1d3; height: 22px; }
.ball { width: 20px; height: 18px; }
.status .dd { font-size: 9px; }
.under { height: 10px; background: #eff0f1; overflow: hidden; text-align: right; padding: 5px 38px 0 0; }
.under time { font: 14px/18px "Noto Sans", sans-serif; display: block; }
```
